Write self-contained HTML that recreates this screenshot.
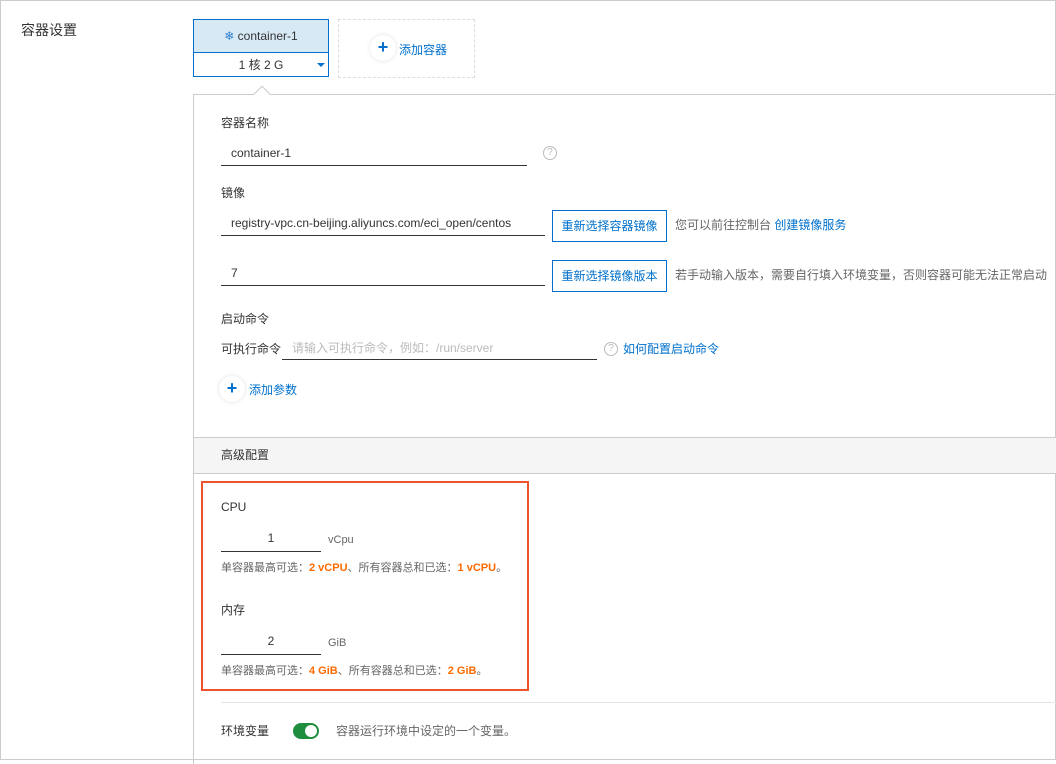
<!DOCTYPE html>
<html><head><meta charset="utf-8"><style>
*{box-sizing:border-box;margin:0;padding:0}
body{width:1056px;height:755px;position:relative;overflow:hidden;background:#fff;font-family:"Liberation Sans","Noto Sans CJK SC",sans-serif;font-size:12px;line-height:14px;color:#333}
.a{position:absolute}
.outer{left:0;top:0;width:1056px;height:760px;border:1px solid #ccc}
.ul{border-bottom:1px solid #333}
.btn{border:1px solid #0070cc;color:#0070cc;text-align:center;line-height:30px;height:32px;font-size:12px}
.blue{color:#0070cc}
.or{color:#ff6a00;font-weight:bold}
.g{color:#666}
.plus{width:26px;height:26px;border-radius:13px;background:#fff;box-shadow:0 0 4px rgba(0,0,0,.12);color:#0070cc;font-size:18px;font-weight:bold;text-align:center;line-height:25px}
</style></head><body>
<div class="a outer"></div>
<div class="a" style="left:21px;top:23px;font-size:14px">容器设置</div>
<div class="a" style="left:193px;top:19px;width:136px;height:58px;border:1px solid #0070cc"></div>
<div class="a" style="left:194px;top:20px;width:134px;height:33px;background:#d8e9f6;border-bottom:1px solid #0070cc;text-align:center;line-height:33px;font-size:12px;color:#333"><span style="color:#2b7fd0">❄</span> container-1</div>
<div class="a" style="left:194px;top:54px;width:134px;height:22px;text-align:center;line-height:22px">1 核 2 G</div>
<div class="a" style="left:317px;top:63px;width:0;height:0;border-left:4px solid transparent;border-right:4px solid transparent;border-top:4px solid #0070cc"></div>
<div class="a" style="left:338px;top:19px;width:137px;height:59px;border:1px dashed #ddd"></div>
<div class="a plus" style="left:370px;top:35px">+</div>
<div class="a blue" style="left:399px;top:43px">添加容器</div>
<div class="a" style="left:193px;top:94px;width:870px;height:670px;border-left:1px solid #ccc;border-top:1px solid #ccc"></div>
<div class="a" style="left:256px;top:88px;width:12px;height:12px;background:#fff;border-left:1px solid #ccc;border-top:1px solid #ccc;transform:rotate(45deg)"></div>
<div class="a" style="left:221px;top:116px">容器名称</div>
<div class="a ul" style="left:221px;top:142px;width:306px;height:24px;padding-left:10px;line-height:22px">container-1</div>
<div class="a" style="left:543px;top:146px;width:14px;height:14px;border:1px solid #bbb;border-radius:7px;color:#bbb;font-size:10px;text-align:center;line-height:12px">?</div>
<div class="a" style="left:221px;top:186px">镜像</div>
<div class="a ul" style="left:221px;top:212px;width:324px;height:24px;padding-left:10px;line-height:22px">registry-vpc.cn-beijing.aliyuncs.com/eci_open/centos</div>
<div class="a btn" style="left:552px;top:210px;width:115px">重新选择容器镜像</div>
<div class="a g" style="left:675px;top:218px">您可以前往控制台 <span class="blue">创建镜像服务</span></div>
<div class="a ul" style="left:221px;top:262px;width:324px;height:24px;padding-left:10px;line-height:22px">7</div>
<div class="a btn" style="left:552px;top:260px;width:115px">重新选择镜像版本</div>
<div class="a g" style="left:675px;top:268px">若手动输入版本，需要自行填入环境变量，否则容器可能无法正常启动</div>
<div class="a" style="left:221px;top:312px">启动命令</div>
<div class="a" style="left:221px;top:342px">可执行命令</div>
<div class="a ul" style="left:282px;top:336px;width:315px;height:24px;padding-left:10px;line-height:24px;color:#bbb">请输入可执行命令，例如：/run/server</div>
<div class="a" style="left:604px;top:342px;width:14px;height:14px;border:1px solid #bbb;border-radius:7px;color:#bbb;font-size:10px;text-align:center;line-height:12px">?</div>
<div class="a blue" style="left:623px;top:342px">如何配置启动命令</div>
<div class="a plus" style="left:219px;top:376px">+</div>
<div class="a blue" style="left:249px;top:383px">添加参数</div>
<div class="a" style="left:194px;top:437px;width:862px;height:37px;background:#f5f5f5;border-top:1px solid #ccc;border-bottom:1px solid #ccc;padding-left:27px;line-height:35px">高级配置</div>
<div class="a" style="left:201px;top:481px;width:328px;height:210px;border:2px solid #f0522c"></div>
<div class="a" style="left:221px;top:500px">CPU</div>
<div class="a ul" style="left:221px;top:528px;width:100px;height:24px;text-align:center;line-height:20px">1</div>
<div class="a g" style="left:328px;top:533px;font-size:11px">vCpu</div>
<div class="a g" style="left:221px;top:561px;font-size:11px">单容器最高可选：<span class="or">2 vCPU</span>、所有容器总和已选：<span class="or">1 vCPU</span>。</div>
<div class="a" style="left:221px;top:603px">内存</div>
<div class="a ul" style="left:221px;top:631px;width:100px;height:24px;text-align:center;line-height:20px">2</div>
<div class="a g" style="left:328px;top:636px;font-size:11px">GiB</div>
<div class="a g" style="left:221px;top:664px;font-size:11px">单容器最高可选：<span class="or">4 GiB</span>、所有容器总和已选：<span class="or">2 GiB</span>。</div>
<div class="a" style="left:221px;top:702px;width:835px;border-top:1px solid #e5e5e5"></div>
<div class="a" style="left:221px;top:724px">环境变量</div>
<div class="a" style="left:293px;top:723px;width:26px;height:16px;border-radius:8px;background:#1e8e3e"></div>
<div class="a" style="left:305px;top:725px;width:12px;height:12px;border-radius:6px;background:#fff"></div>
<div class="a g" style="left:336px;top:724px">容器运行环境中设定的一个变量。</div>
</body></html>
